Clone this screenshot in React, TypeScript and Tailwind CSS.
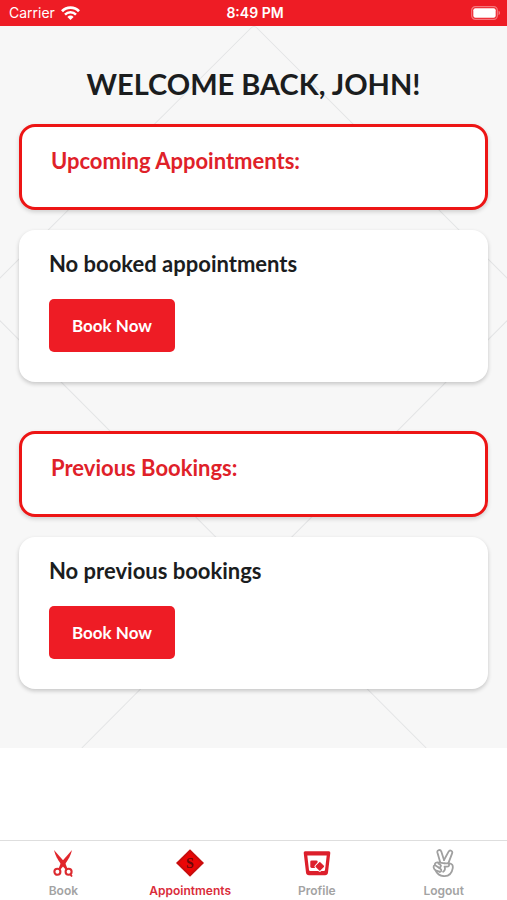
import type { ReactNode } from "react";

const StatusBar = () => (
  <header className="grid h-[26px] grid-cols-3 items-center bg-[#ee1c25] pr-[6px] pl-[9px] font-['Inter',sans-serif] text-sm text-white">
    <div className="flex items-center gap-1.5">
      <span>Carrier</span>
      <svg className="h-[14px] w-[19px]" viewBox="0 0 19 14" fill="none" stroke="currentColor" aria-label="Wi-Fi">
        <path d="M1 5.2a12 12 0 0 1 17 0" strokeWidth="2.8" />
        <path d="M4 8.6a7.8 7.8 0 0 1 11 0" strokeWidth="2.5" />
        <path d="M9.5 14 6.4 10.900a4.400 4.400 0 0 1 6.200 0Z" fill="currentColor" stroke="none" />
      </svg>
    </div>
    <span className="text-center font-semibold">8:49 PM</span>
    <svg className="h-[14px] w-[30px] justify-self-end" viewBox="0 0 30 14" aria-label="Battery">
      <rect x="0.7" y="0.7" width="25.6" height="12.6" rx="3.6" fill="none" stroke="#ffffff" strokeOpacity="0.4" strokeWidth="1.2" />
      <rect x="2.3" y="2.3" width="22.4" height="9.4" rx="2" fill="#ffffff" />
      <path d="M27.6 4.8c1.6.5 1.6 3.9 0 4.4Z" fill="#ffffff" fillOpacity="0.5" />
    </svg>
  </header>
);

// Thin diamond lines behind the cards
const Backdrop = () => (
  <svg
    className="absolute inset-0 h-full w-full"
    viewBox="0 0 507 721"
    preserveAspectRatio="xMidYMin slice"
    fill="none"
    stroke="#e3e4e5"
    aria-hidden="true"
  >
    <path d="M-2 254 251 2Q254-1 257 2L509 254" />
    <path d="M-2 292 426 721" />
    <path d="M509 292 82 721" />
  </svg>
);

const ScissorsIcon = () => (
  <svg className="h-7 w-7" viewBox="0 0 28 28" fill="none" stroke="#dc2b30" aria-hidden="true">
    <path d="M5 1 16 13.6 18.6 20l-1.8.8-4.6-5.4C8.4 10.6 6.200 6 5 1Z" fill="#e1262c" stroke="none" />
    <path d="M23 1 12 13.600 9.400 20l1.800.8 4.600-5.400C19.600 10.600 21.800 6 23 1Z" fill="#e1262c" stroke="none" />
    <circle cx="8.400" cy="22.800" r="3" strokeWidth="2.100" />
    <circle cx="19.600" cy="22.800" r="3" strokeWidth="2.100" />
    <path d="M21.200 25.200 23 27.600" strokeWidth="1.700" />
  </svg>
);

const DiamondIcon = () => (
  <svg className="h-7 w-7" viewBox="0 0 28 28" aria-hidden="true">
    <path d="M14 .3 28 14 14 27.700 0 14Z" fill="#c80d0d" />
    <path d="M14 3 25 14 14 25 3 14Z" fill="#ea0606" />
    <text x="14" y="19" textAnchor="middle" fill="#6b0808" className="font-['Liberation_Serif',serif] text-sm font-bold">
      S
    </text>
  </svg>
);

const GlassIcon = () => (
  <svg className="h-7 w-7" viewBox="0 0 28 28" aria-hidden="true">
    <path
      d="M2.200 2.200h23.600a1.500 1.500 0 0 1 1.500 1.700l-2.300 19.600a3 3 0 0 1-3 2.700H6a3 3 0 0 1-3-2.700L.7 3.900a1.500 1.500 0 0 1 1.500-1.700ZM4.300 6.400l1.700 14.600a1.200 1.200 0 0 0 1.200 1h13.600a1.200 1.200 0 0 0 1.200-1L23.700 6.400Z"
      fill="#dc1f2b"
      fillRule="evenodd"
    />
    <rect x="7.300" y="11.400" width="7.400" height="7.600" rx="1.400" fill="#dc1f2b" />
    <rect
      x="13"
      y="13.600"
      width="7.600"
      height="7.600"
      rx="1.300"
      transform="rotate(45 16.800 17.400)"
      fill="#dc1f2b"
      stroke="#ffffff"
      strokeWidth="1"
    />
  </svg>
);

const PeaceIcon = () => (
  <svg
    className="h-7 w-7"
    viewBox="0 0 28 28"
    fill="none"
    stroke="#a0a0a0"
    strokeWidth="1.800"
    strokeLinecap="round"
    strokeLinejoin="round"
    aria-hidden="true"
  >
    <path d="M10.200 13.300 7.400 3.500c-.6-2.700 3-3.500 3.900-1L14 11" />
    <path d="M14 11 18.600 2.600c1.300-2.100 4.400-.6 3.500 1.700l-3.700 9.800" />
    <path d="M18.400 14.100c4 .5 4.800 2.300 4.300 5.200-.8 4.700-3.500 7.600-8 7.800-4.300.2-7.600-2-9.100-5.700" />
    <path d="M14.700 14.300 8.400 13.400C6 13 4.600 14.300 4.800 16c-1.700.8-1.800 3.300.8 5.400l3.800 1.300" />
    <path d="m4.800 16 3.800 2.400c1.600.8 3.300-1.500 1.700-2.700l-1.900-1.200" />
    <path d="M14.700 14.300h3.700c1.700 1.900.4 3.300-1.700 3.300h-2.200c.9 2 .3 4-1.400 5.200" />
    <path d="m8.700 18.500 1.700 1.300c1.800 1.300.6 3.600-1 2.900" />
  </svg>
);

interface BookingSectionProps {
  title: string;
  message: string;
}

const BookingSection = ({ title, message }: BookingSectionProps) => (
  <section className="flex flex-col gap-5">
    <div className="rounded-2xl border-3 border-[#ed1515] bg-white px-[29px] pt-[18px] pb-[30px] shadow-[0_2px_4px_rgba(0,0,0,0.16)]">
      <h2 className="text-[22px] leading-8 font-bold text-[#df2129]">{title}</h2>
    </div>
    <div className="rounded-2xl bg-white px-[30px] pt-[18px] pb-[30px] shadow-[0_2px_4px_rgba(0,0,0,0.2)]">
      <p className="text-[22px] leading-8 font-bold text-[#1b1d1e]">{message}</p>
      <button
        type="button"
        className="mt-[19px] block h-[53px] rounded-[5px] bg-[#ee1c25] px-[23px] text-[17px] font-bold text-white"
      >
        Book Now
      </button>
    </div>
  </section>
);

interface TabProps {
  label: string;
  icon: ReactNode;
  active?: boolean;
}

const Tab = ({ label, icon, active }: TabProps) => (
  <a
    href="#"
    aria-current={active ? "page" : undefined}
    className={`flex flex-1 flex-col items-center gap-1.5 pt-2 ${active ? "text-[#da2c3b]" : "text-[#a3a3a3]"}`}
  >
    {icon}
    <span className="text-xs leading-4 font-semibold">{label}</span>
  </a>
);

const App = () => {
  return (
    <div className="flex min-h-screen flex-col bg-white font-['Lato',sans-serif]">
      <StatusBar />

      <main className="relative bg-[#f7f7f7] px-[19px] pt-10 pb-[59px]">
        <Backdrop />
        <div className="relative">
          <h1 className="text-center text-[29px] leading-9 font-bold text-[#1b1d1e]">WELCOME BACK, JOHN!</h1>
          <div className="mt-[22px] flex flex-col gap-[49px]">
            <BookingSection title="Upcoming Appointments:" message="No booked appointments" />
            <BookingSection title="Previous Bookings:" message="No previous bookings" />
          </div>
        </div>
      </main>

      <nav className="mt-auto flex h-[60px] border-t border-[#dedede] bg-white font-['Inter',sans-serif]">
        <Tab label="Book" icon={<ScissorsIcon />} />
        <Tab label="Appointments" icon={<DiamondIcon />} active />
        <Tab label="Profile" icon={<GlassIcon />} />
        <Tab label="Logout" icon={<PeaceIcon />} />
      </nav>
    </div>
  );
};

export default App;
